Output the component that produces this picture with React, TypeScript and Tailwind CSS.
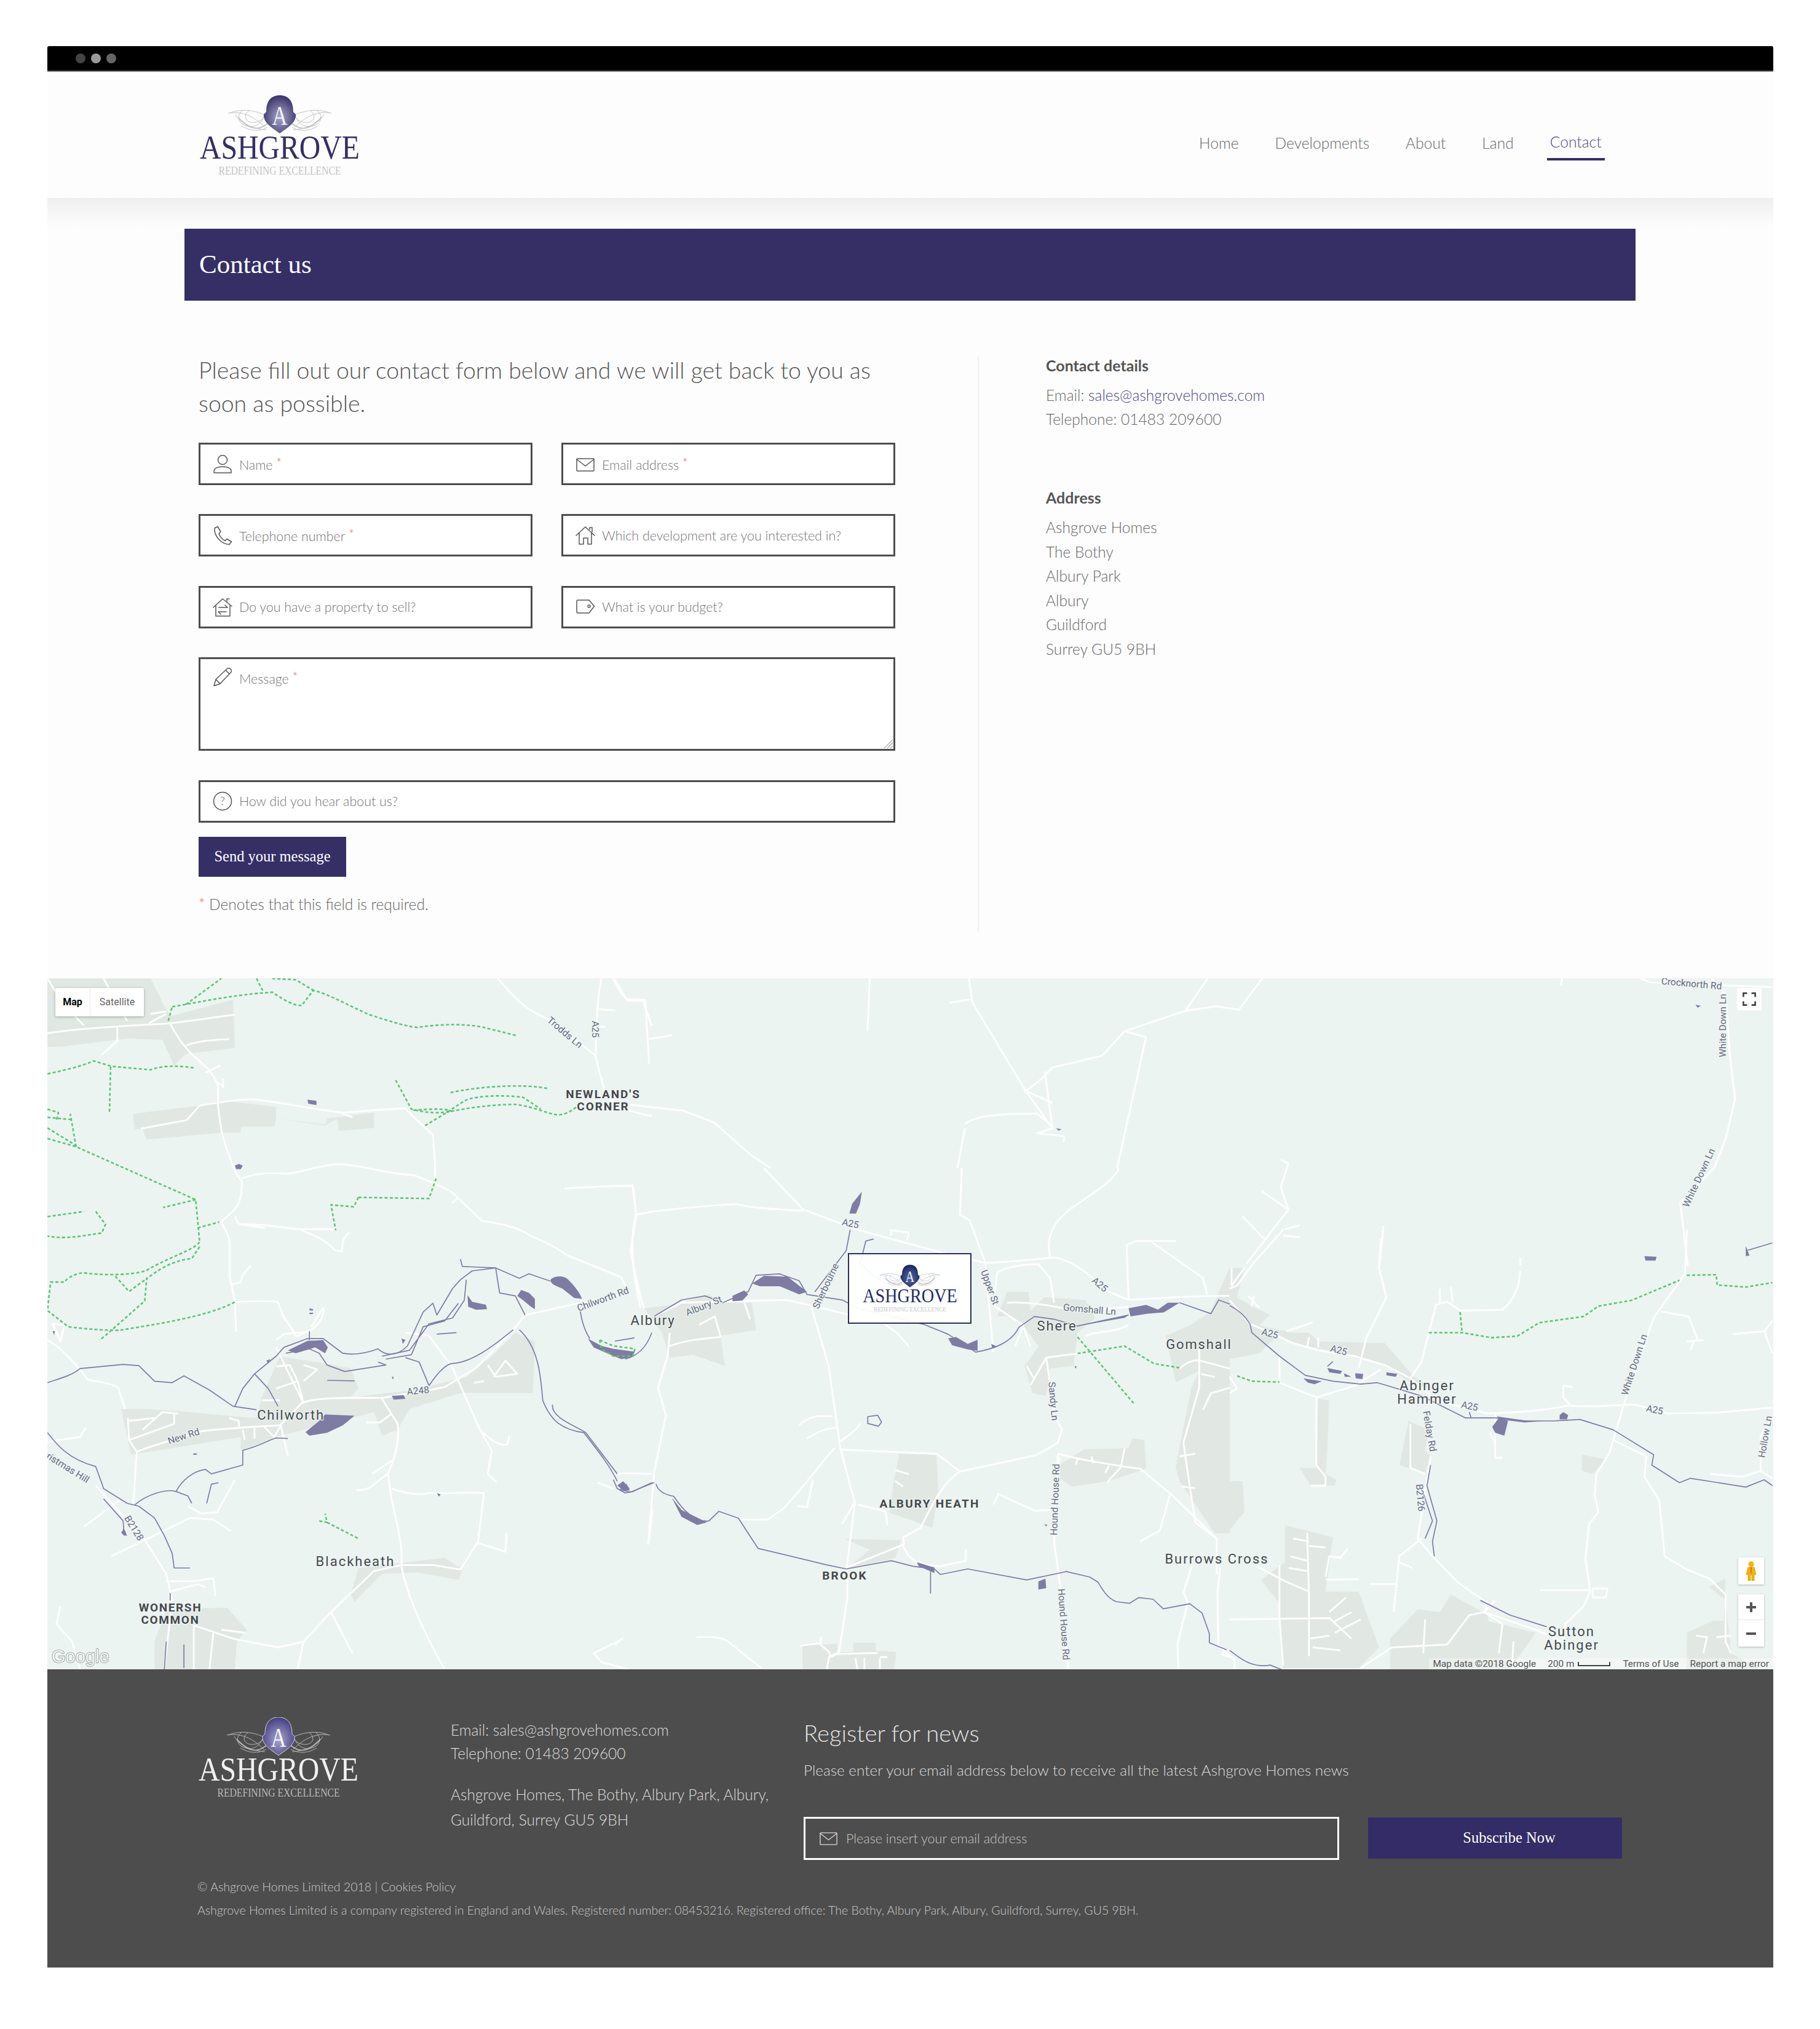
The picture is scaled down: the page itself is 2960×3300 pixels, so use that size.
import React from "react";

type Layer = { o: [number, number]; s: [number, number]; areas?: string[]; roads?: string[]; rivers?: string[]; ponds?: string[]; greens?: string[] };

const layers: Layer[] = [
  {
    o: [60, 1580],
    s: [1 / 1.568, 1 / 2.613],
    areas: [
      "M27,30 L290,30 L320,130 L340,190 L500,120 L505,325 L380,350 L350,400 L320,290 L230,285 L60,320 L27,320Z",
      "M245,605 L415,570 L470,548 L610,575 L610,625 L735,650 L740,625 L860,600 L860,665 L770,678 L765,625 L735,655 L610,625 L605,660 L520,660 L520,685 L470,685 L280,715 L270,670 L250,670Z",
    ],
    roads: [
      "M27,262 C100,245 200,232 330,222 C400,210 450,195 505,183",
      "M340,222 C355,270 370,310 400,360 C430,400 455,440 462,490 L462,560 C465,640 475,720 490,780 C500,830 510,870 522,890 C525,950 515,990 505,1010 L470,1065 C480,1100 492,1120 492,1170 L492,1300 L505,1400 L508,1530",
      "M380,315 C410,295 450,290 490,288",
      "M205,235 L205,295 L165,355",
      "M27,30 L60,120 L80,160 L120,230 M170,30 L200,120 L230,210 M290,180 L330,170 M285,220 L330,180",
      "M265,668 L382,632 L415,570 C470,555 520,540 560,545 C620,555 700,585 780,600 C830,595 880,585 940,582 C960,620 975,640 1010,695 C1012,760 1018,820 1015,880",
      "M780,605 L805,620",
      "M522,880 C560,855 600,855 640,860 C680,850 720,825 760,820 C820,815 880,860 960,865 C1000,890 1040,920 1060,940 L1135,1060 C1200,1075 1240,1100 1260,1125 C1300,1150 1340,1190 1350,1205 C1400,1240 1450,1270 1490,1300 L1510,1370",
      "M505,1040 C510,1065 515,1080 530,1075 C600,1075 640,1095 670,1095 L765,1095",
      "M520,1075 L582,1090 M1075,960 L1058,985",
      "M670,1095 C700,1120 730,1130 760,1185 L778,1190 C780,1150 780,1130 797,1110",
      "M505,1405 C550,1400 590,1400 615,1405 C625,1470 650,1510 660,1550 C700,1530 730,1500 732,1430",
      "M497,1330 L520,1320 L525,1290 L545,1250",
      "M1175,30 C1210,90 1230,150 1300,200 C1360,280 1420,340 1425,365 L1445,490 C1445,510 1460,570 1530,600 L1568,615",
      "M1440,30 C1430,100 1425,250 1425,365 M1425,160 L1475,165 M1425,235 L1450,235",
      "M1345,922 C1400,918 1470,910 1520,910 L1528,1030 C1510,1150 1520,1300 1540,1430",
      "M1528,1035 L1568,1020",
      "M1470,30 C1480,70 1500,120 1510,125 L1545,125 L1568,230",
      "M430,430 L468,400 M460,470 L475,490 L475,455",
    ],
    ponds: ["M690,545 L713,550 L713,568 L692,562Z", "M505,825 L515,818 L525,825 L520,840 L508,840Z", "M695,1432 L705,1435 L703,1442 L695,1440Z M695,1450 L705,1450 L703,1456 L695,1456Z"],
    greens: [
      "M380,140 L470,30",
      "M345,150 C430,125 500,100 600,88 C620,110 650,145 675,145 L705,80 C750,100 800,150 850,185 C900,210 930,230 970,238 C1030,222 1100,222 1140,238 L1222,272",
      "M560,30 L578,88",
      "M600,30 L660,35 L705,80",
      "M335,210 L345,150",
      "M27,435 C70,420 110,405 145,380 L190,403 L290,418 C310,405 345,395 400,410",
      "M188,405 L185,600",
      "M915,462 L955,585 C990,600 1020,605 1055,595 C1100,580 1160,565 1220,565 C1270,575 1300,605 1330,610 C1355,605 1380,580 1385,550",
      "M1055,515 C1120,490 1240,475 1305,498",
      "M990,655 L1040,605 L1090,550 C1120,525 1200,525 1240,535 L1285,585",
      "M960,590 C1000,585 1040,580 1060,595",
      "M27,710 L100,745 L405,970 L415,1150",
      "M410,1090 L465,1065",
      "M405,970 L322,1003",
      "M100,745 L85,605 M27,620 L90,630 M27,585 L55,600 L50,630 M27,665 L100,740",
      "M820,960 L1000,965 L1018,880 M820,960 L808,1000 L750,992 L762,1100",
      "M27,1042 L120,1020 M150,1020 L175,1075 L165,1112 C120,1120 85,1140 27,1125",
      "M415,1150 C395,1190 340,1210 280,1270 C240,1295 150,1290 118,1280 C85,1290 75,1310 70,1320 L35,1320 C30,1400 25,1440 30,1445 L80,1510 C130,1520 170,1525 210,1525 C300,1500 430,1470 505,1405",
      "M415,1170 L395,1220 C340,1230 310,1270 280,1305 L275,1400 L190,1525 L160,1568",
      "M200,1295 L235,1360 L280,1305",
    ],
  },
  {
    o: [60, 2000],
    s: [1 / 1.568, 1 / 2.09],
    areas: [
      "M215,610 C330,605 480,635 560,640 L575,565 L620,430 L800,470 L820,540 L800,570 L960,545 L1095,500 L1160,430 L1220,350 L1270,380 L1265,555 L1080,555 L950,610 L920,680 L880,700 L860,620 L620,700 L520,750 L520,705 L240,765Z",
      "M820,1150 L1040,1115 L1085,1155 L1075,1190 L970,1165 L880,1170 L810,1265 L800,1240Z",
      "M300,1400 L330,1290 L485,1285 L535,1360 L510,1400 L505,1495 L300,1495Z",
    ],
    roads: [
      "M27,375 C60,400 90,440 130,510 C170,520 200,525 208,540 L225,610",
      "M232,640 L235,715 L255,755 C250,830 250,880 245,930",
      "M255,755 C290,735 330,722 420,685 C500,672 560,670 620,665 L675,590 C700,575 740,570 880,572 L1000,545 L1040,535 L1120,470 L1215,340 L1245,290 L1380,250 L1510,215",
      "M880,575 L920,660 C925,720 915,770 895,830 L900,875 C905,950 925,1000 930,1100 L930,1145 C945,1260 1000,1400 1040,1495",
      "M610,400 L680,590 M622,665 L640,770",
      "M1000,360 L1060,470 L1130,680 L1160,750 L1150,830 L1172,858 M940,350 L1000,360",
      "M1130,680 C1160,720 1180,735 1200,730 L1205,700",
      "M905,880 C940,895 970,905 1000,895 C1040,900 1080,890 1140,895 L1125,1060 L1080,1155 L1010,1140 L930,1140 L860,1160 L750,1300 L680,1400 L615,1420 L500,1390 L400,1345",
      "M1125,1065 L1195,1095 L1198,1030",
      "M27,720 L110,705 L125,672",
      "M275,1055 L390,980 L450,985 L495,1025",
      "M150,870 L275,1055 L330,1170 L345,1260 L325,1490",
      "M120,1010 L210,920 M275,1055 L190,1110 M505,850 L460,960 L420,965 L385,940",
      "M855,830 L905,785 M815,885 C850,890 860,860 895,830",
      "M750,1300 L805,1440 M680,1400 L665,1495 M400,1345 L400,1495 M450,1370 L440,1495 M470,1360 L530,1370",
      "M235,650 L300,640 M270,680 L320,620 L360,625 M235,715 L350,660 M350,660 L350,620 M490,640 L515,650 L515,670",
      "M525,680 L530,715 M555,675 L555,710 M580,670 L605,705 L620,670",
      "M610,465 L645,460 L665,515 L610,540 M680,460 L715,475 L680,515 M665,515 L680,590 M575,580 L620,580",
      "M1115,520 L1140,515 M1150,460 L1170,500 L1225,490 L1195,445 L1165,500",
      "M840,655 L875,655 L905,625",
      "M330,1195 L400,1195 L450,1185 L455,1245 M340,1230 L410,1205 L430,1215",
      "M60,1280 L50,1340 L90,1400 L110,1495 M1495,1390 L1420,1440 L1440,1470 L1510,1495",
      "M1570,950 L1560,1070 M1430,860 L1470,880 M1480,830 C1510,825 1540,830 1568,830",
      "M700,330 L730,265 M610,375 L630,355 L700,345 M655,345 L625,290",
      "M45,320 L70,325 L60,380 L40,320Z",
    ],
    rivers: [
      "M27,520 C60,505 90,495 110,472 L220,458 L260,462 L300,515 L345,520 L375,497 L440,545 L500,600 L560,612",
      "M505,600 L525,540 L555,490 L610,430 L630,400 L690,370 L730,370 L780,420 C820,430 860,410 870,405 C890,430 920,430 945,395 L985,280 L1010,250 L1020,290 L1060,200 L1080,170 L1110,140 L1170,130 L1230,165 L1255,150 L1310,175",
      "M870,450 L890,460 L785,482 L740,460 L720,420 L695,405 L635,420",
      "M1170,130 L1180,215 L1220,225 L1245,290 M1080,100 L1085,125 L1170,130",
      "M555,490 L590,540 L615,600",
      "M1000,530 C1030,470 1050,455 1060,455 C1110,450 1160,400 1215,340",
      "M940,435 L975,450 L1000,530 M880,430 L950,410 L1000,320 L1060,300 L1090,240 L1095,170 M890,440 L955,425 L985,330 L1040,310 L1075,250",
      "M1230,340 C1280,400 1285,500 1290,580 C1310,650 1340,680 1395,690 C1430,750 1460,800 1480,855",
      "M1315,595 C1310,640 1380,670 1400,690 L1480,830",
      "M27,690 C50,730 80,780 150,805 L165,860 L170,880 L230,930 L260,940 L300,980 L325,1040 L345,1100 L350,1150 L390,1150",
      "M170,915 L220,990 L222,1030",
      "M250,935 C280,900 330,880 355,890 L385,905 L395,930 M355,890 C370,850 400,820 430,815 L445,830 L525,800 L525,750 C570,735 590,715 610,708 L640,710",
      "M433,930 L445,865 L463,860 M740,512 L810,514 M1020,355 L1070,350 M695,345 L695,375",
      "M1385,270 C1390,320 1400,350 1410,370",
      "M1500,440 C1530,430 1555,400 1568,350",
      "M1470,850 L1480,880 L1500,895 L1520,890 L1568,860",
      "M375,1490 L375,1410 M340,1235 L340,1260 M330,1400 L325,1495",
    ],
    ponds: [
      "M1310,170 C1320,155 1345,155 1355,170 C1370,190 1385,215 1390,235 L1370,232 L1340,200 C1320,190 1310,185 1310,170Z",
      "M1098,222 L1110,245 L1145,255 L1148,270 L1120,272 L1100,262Z",
      "M1225,225 L1235,205 L1255,215 L1270,235 L1270,270 L1260,262 L1240,240Z",
      "M640,410 L690,378 L730,375 L742,400 L735,420 L710,400 L660,420Z",
      "M735,628 L810,632 L780,665 L740,690 L695,700 L685,688 L720,650Z",
      "M1405,370 L1440,395 L1470,405 L1525,415 L1515,435 L1490,440 L1445,415 L1420,400Z",
      "M905,565 L935,562 L940,575 L910,578Z",
      "M1480,870 L1495,855 L1512,880 L1500,890Z",
      "M215,1030 L222,1015 L230,1040 L222,1040Z",
      "M400,760 L408,760 L408,765 L398,765Z",
      "M1020,895 L1030,900 L1025,907Z",
      "M930,370 L940,375 L933,388Z M905,500 L910,500 L908,510Z M585,445 L595,440 L590,455Z",
      "M40,345 L46,345 L44,358Z",
    ],
    greens: [
      "M720,990 L740,995 L735,965 M740,995 L820,1050",
      "M1435,375 L1440,405 L1470,430 L1520,430 L1525,405 L1470,395Z",
    ],
  },
  {
    o: [1000, 1900],
    s: [1 / 1.568, 1 / 2.24],
    areas: [
      "M75,510 L160,495 L240,460 L270,490 L350,490 L360,590 L270,610 L280,720 L200,680 L140,690 L120,600Z",
      "M1000,450 L1055,450 L1060,520 L1095,470 L1200,480 L1225,545 L1180,600 L1170,720 L1110,730 L1100,830 L1065,820 L1045,720 L1080,650 L1040,570 L1010,540 L975,540Z",
      "M725,1040 L820,1045 L825,1180 L810,1310 L700,1255 L710,1150Z",
      "M585,1350 L730,1355 L715,1420 L590,1460 L650,1390Z",
      "M1135,1080 L1195,1025 L1310,1020 L1320,985 L1350,990 L1355,1095 L1260,1140 L1165,1160 L1135,1130Z",
      "M1405,610 L1470,570 L1520,520 L1568,360 L1568,1330 L1530,1330 L1440,1140 L1430,1090 L1470,800 L1490,740 L1430,780Z",
    ],
    roads: [
      "M380,0 L480,150 L620,225 L840,310 L945,345 C1020,340 1080,330 1120,325 C1170,335 1220,400 1260,450 L1310,480 C1380,475 1450,465 1568,465",
      "M50,170 C100,155 200,140 310,130 C340,145 420,150 480,155",
      "M45,65 L0,65 M45,65 L55,170 L40,300 L65,470 L75,510",
      "M885,0 L880,170 L905,190 L945,345 L965,670",
      "M1285,0 C1270,50 1220,90 1170,140 C1110,200 1100,260 1110,325",
      "M100,540 L170,490 L290,485 L440,480 L500,500 L600,535",
      "M500,500 L545,720 L575,1020 L612,1220 L590,1470",
      "M140,600 L135,680 L110,800 L130,900 L100,1110 L85,1370",
      "M135,650 C170,630 220,620 270,615 L255,540 L215,570 M330,490 L345,550",
      "M575,1025 L820,1040 L880,1105 L1075,1045 L1130,1000 L1140,950 L1120,900",
      "M880,1105 C840,1140 810,1220 780,1310 L735,1345 L738,1370 L590,1455",
      "M735,1375 C750,1430 770,1445 830,1450 L895,1430 L895,1390",
      "M1130,1040 C1180,1060 1280,1085 1340,1095 L1420,1190 L1535,1350 L1535,1480",
      "M1130,1040 L1120,1360 L1140,1568",
      "M570,1000 C600,970 620,950 625,930 M470,935 C500,900 520,900 555,905 M490,985 C530,950 540,950 565,945",
      "M560,1020 C510,1100 500,1130 430,1240 L390,1280 L320,1280 M505,1135 L490,1235 L465,1230",
      "M1000,490 C1060,485 1110,500 1180,520 L1310,505",
      "M975,1185 L1070,1248 L1110,1245 M965,1225 L980,1185",
      "M1490,660 L1490,800 L1450,1000 L1460,1100 L1480,1290 L1535,1350",
      "M1180,675 L1100,690 L1060,790 M1100,690 L1120,880 M1050,720 L1070,770",
      "M975,380 C1000,355 1050,350 1080,350 L1110,400 L1120,490 M975,380 L965,500 L1040,570 L1060,650",
      "M1310,480 L1305,280 L1330,265 L1430,265 M1370,270 L1500,400 L1510,460",
      "M1490,700 C1460,700 1450,720 1440,730 M1490,700 L1568,730 M1495,750 L1530,760",
      "M1500,880 L1520,820 L1568,800 M1440,1050 L1480,1040 M1445,1160 L1480,1165",
      "M1415,1190 L1390,1320 L1340,1360",
      "M1200,610 C1240,590 1280,600 1310,570",
      "M610,1220 L580,1295 M620,1225 L690,1250 L695,1300 M715,1100 L750,1115 M715,1140 L735,1160",
      "M680,560 L720,600 L750,650 M700,225 L750,235 L745,262 M706,225 L704,245",
      "M1135,1055 L1130,1080 M1180,1060 L1175,1080 M1215,1050 L1220,1075 M1260,1085 L1250,1110 M1300,1020 L1290,1090 L1255,1145",
      "M1040,580 L1020,650",
    ],
    rivers: [
      "M100,540 L170,480 L230,465 L275,490 L340,450 L360,390 L420,385 L470,410 L490,460 L580,480 L620,510 L790,570 L850,605 L920,670 C960,660 1010,640 1030,580 L1070,540 L1120,550 L1180,575 L1310,535",
      "M600,225 L590,300 L510,450",
      "M625,350 L640,265 L660,258 M620,340 L660,390 L690,420",
      "M100,1145 L40,1180 L10,1170",
      "M105,1150 C110,1180 130,1190 150,1195 C180,1260 210,1290 240,1285 L265,1250 L315,1275 L365,1385 L540,1445 L590,1460 L705,1430 L760,1450 L815,1460 L830,1480 L900,1460 L1050,1500 L1150,1470",
      "M805,1470 L805,1550",
      "M645,905 L670,900 L680,925 L672,940 L645,930Z",
      "M1440,490 L1520,530 L1540,480 L1568,495",
      "M0,630 L50,618",
    ],
    ponds: [
      "M630,85 L625,130 L615,165 L598,165 L605,130Z",
      "M350,420 L380,392 L440,395 L490,450 L470,460 L420,430 L370,430Z",
      "M300,465 L330,445 L340,460 L325,482 L300,485Z",
      "M850,620 L870,615 L900,640 L925,625 L925,665 L900,660 L860,645Z",
      "M1310,510 L1355,498 L1385,515 L1410,490 L1440,490 L1400,525 L1360,530 L1315,540Z",
      "M1190,570 L1310,535 L1300,545 L1200,570Z",
      "M145,1200 L170,1245 L235,1290 L210,1300 L170,1270Z",
      "M10,1150 L30,1150 L38,1175 L15,1170Z",
      "M770,1435 L815,1455 L815,1475 L775,1450Z",
      "M1080,1505 L1098,1495 L1100,1530 L1080,1535Z",
      "M960,640 L975,650 L962,655Z",
      "M1095,1298 L1103,1298 L1100,1305Z M1172,722 L1178,722 L1175,730Z",
    ],
    greens: ["M1180,615 L1325,860", "M1180,675 L1300,648 L1375,712 L1445,728"],
  },
  {
    o: [1000, 2540],
    s: [1 / 1.508, 1 / 3],
    areas: ["M460,410 L545,400 L545,440 L585,440 L585,395 L640,395 L640,435 L690,440 L685,525 L460,525Z"],
    roads: [
      "M1096,180 L1112,525",
      "M570,90 L570,180 L550,440 L525,465 L520,525",
      "M200,368 C230,365 260,370 275,385 L360,520",
      "M0,405 L18,375",
      "M455,410 L500,398 L525,440 L530,465 L545,450 L645,445",
      "M505,365 L505,400 M590,470 L595,525 M612,470 L612,525 M650,470 L650,525 M650,465 L668,465",
      "M1415,20 L1395,150 L1405,200 L1380,400 L1382,525",
      "M1485,20 L1478,150 L1480,410 L1520,480 L1520,525 M1495,430 L1490,455 L1520,470",
    ],
    rivers: ["M1105,47 L1165,75 L1185,100 C1200,150 1210,180 1230,195 L1262,203 L1285,175 L1320,183 L1345,230 L1410,205 L1440,250 L1458,350 L1458,395 L1500,430"],
  },
  {
    o: [2000, 2000],
    s: [1 / 1.668, 1 / 2.09],
    areas: [
      "M0,130 L40,130 L20,230 L60,260 L110,290 L80,325 L170,350 L215,350 L240,380 L420,385 L500,500 L560,545 L490,520 L420,460 L340,430 L170,385 L130,360 L80,420 L0,440Z",
      "M240,575 L270,580 L265,740 L260,830 L290,850 L285,870 L220,870 L190,810 L235,810Z",
      "M485,650 L540,680 L530,750 L545,770 L530,830 L460,800Z",
      "M955,765 L1020,780 L985,830 L955,820Z",
      "M0,855 L35,855 L40,960 L0,1020Z",
      "M150,1005 L280,1045 L260,1230 L350,1230 L405,1420 L350,1490 L145,1490 L135,1270 L85,1190 L150,1130Z",
      "M435,1390 L510,1290 L570,1300 L600,1240 L700,1310 L700,1330 L830,1370 L760,1495 L435,1495Z",
      "M1240,1370 L1310,1330 L1340,1330 L1345,1185 L1300,1215 L1345,1260 L1360,1440 L1440,1495 L1240,1495Z",
    ],
    roads: [
      "M145,0 L60,120 L20,190 L0,200 M145,20 L190,25",
      "M0,240 L55,320 L130,360 L170,385 L240,410 L340,430 L420,460 L490,505 L560,580 L700,625 C800,620 850,615 920,598 C1000,605 1040,595 1100,595 L1190,625 L1320,622 L1472,605",
      "M410,30 L405,130 L425,230 L370,370 L350,470",
      "M540,350 L520,450 L490,505 M540,350 L560,255 L590,245 L625,275 L740,272 C770,240 785,200 788,140",
      "M570,200 L570,250 M600,195 L605,245",
      "M1240,0 L1235,150 L1150,300 L1070,590 L1030,760 L995,830 L990,900 L1000,960 L975,1000 L965,1120 L978,1230 L960,1280 L910,1340 L905,1400",
      "M1170,278 L1245,295 L1270,375 M1240,380 L1285,375 M1250,410 L1260,378",
      "M905,530 L930,535 M905,530 L905,570 L925,598",
      "M1040,715 L1130,770 L1125,840 L1165,920 L1180,1110 L1240,1155 L1300,1185 L1345,1240 L1345,1400 L1360,1440",
      "M1305,830 L1390,840 L1440,820 L1440,700 L1472,640 M1440,820 L1472,845",
      "M1365,355 L1450,345 L1472,420 M1450,345 L1472,310",
      "M135,430 L135,520 L235,570 L340,530 L410,475 M155,345 L225,315 M240,365 L240,400 M215,365 L210,400",
      "M235,570 L235,800 L260,840 L260,870 L220,870",
      "M545,770 L510,1050 L550,1110 L620,1200 L700,1270 L690,1300 L830,1360 L900,1400",
      "M520,1050 L460,1110 L445,1300 M460,1130 L495,1150 M380,1205 L455,1205",
      "M720,620 L720,775 L740,775 M705,690 L720,720",
      "M842,1225 L975,1225 M985,1220 L1025,1220 L1020,1250 L985,1250Z",
      "M0,1325 L270,1320 L330,1390 M135,1140 L135,1320 L145,1480 M210,1030 L215,1240 L215,1450",
      "M440,1420 L590,1410 L650,1310 L690,1300 L740,1340 L730,1440 M355,1490 L440,1420",
      "M172,1050 L215,1060 M215,1075 L260,1080 M165,1110 L210,1125 M160,1150 L210,1160 M260,1190 L350,1188",
      "M260,1180 L270,1110 L300,1115 L320,1085 M75,1145 L150,1195 L215,1230",
      "M315,1250 L270,1300 M330,1300 L280,1335 M355,1325 L285,1370 M215,1390 L270,1380 M225,1420 L300,1430",
      "M490,660 L490,810 L530,830 M5,130 L5,190 L40,130 M0,500 L20,540 L0,555",
      "M690,1300 L720,1260 M530,1325 L525,1440 M770,1400 L765,1490",
      "M1265,1380 L1295,1385 L1285,1440 M1320,1385 L1360,1380",
      "M50,225 L80,265 M65,225 L60,260",
    ],
    rivers: [
      "M0,258 C20,270 40,290 55,320 L60,350 L135,430 L205,495 L280,515 L355,525 L400,520 L520,565 L640,640 L720,640 L800,650 L880,650 L950,645 L1040,680 L1150,765 L1145,800 L1220,860 L1250,845 L1400,875 L1450,850 L1472,870",
      "M1405,70 L1472,45",
      "M545,800 L535,870 L562,990 L550,1060 L555,1110",
      "M525,895 L550,990 L530,1050",
      "M680,1260 L760,1310 L860,1350",
      "M0,1430 C30,1460 60,1490 110,1480 L140,1495",
      "M265,465 L280,448 M650,620 L655,640",
    ],
    ponds: [
      "M265,470 L305,480 L300,490 L270,485Z",
      "M425,485 L455,490 L450,500 L425,495Z",
      "M712,670 L730,640 L755,650 L745,700 L720,690Z",
      "M725,635 L810,650 L860,650 L800,655 L730,645Z",
      "M895,630 L905,620 L918,630 L915,645 L895,645Z",
      "M200,505 L250,515 L230,525 L212,520Z",
      "M1125,90 L1158,92 L1155,105 L1128,105Z",
      "M1400,55 L1410,88 L1400,90Z",
      "M340,488 L362,490 L360,508 L342,505Z M310,488 L330,500 L312,500Z",
    ],
    greens: [
      "M20,497 L60,515 L135,518",
      "M540,350 L630,350 L710,367 L780,362 L840,316 L960,295 L1000,260 L1090,240 L1220,172",
      "M625,280 L630,345",
      "M1240,155 L1320,153 L1322,188 L1400,195 L1472,180",
    ],
  },
  {
    o: [1000, 1580],
    s: [1 / 0.808, 1 / 3.136],
    roads: [
      "M0,40 L15,140 L40,145 L45,470 M45,345 L75,325",
      "M335,30 L332,305",
      "M465,30 L470,160 L540,610 L575,800 M470,140 L440,160",
      "M852,30 L820,195 L790,178 L750,200 L670,305 L640,430 L575,490 L560,550 L540,610",
      "M670,305 L698,335 L660,1003",
      "M565,510 L575,800 L555,825 L590,840 L590,870 M780,30 L750,200 M540,610 L575,670",
      "M20,680 L90,710 L130,770 L180,940 L205,1003",
      "M460,780 C470,740 500,725 555,725 L575,790 M460,800 L450,1003",
      "M875,960 L885,980 L875,1100 L885,1215 L830,1490 M850,1120 L885,1215 M825,1250 L855,1370",
      "M1010,1295 L1005,1500 M1190,1460 L1190,1500",
      "M1440,30 L1460,120 L1465,420 L1472,650 L1460,850 L1445,1000 L1400,1180 L1410,1500",
      "M1345,30 L1360,55 L1450,70 L1520,80 M1245,30 L1243,70 M880,1315 L900,1295",
    ],
    ponds: ["M1420,170 L1427,175 L1423,185Z", "M580,800 L587,805 L583,812Z"],
  },
];

type Lab = { t: string; x: number; y: number; r?: number; z?: number; b?: boolean; sp?: number; c?: string; a?: "start" | "middle" | "end" };
const labels: Lab[] = [
  { t: "NEWLAND'S", x: 981, y: 1781, z: 19, b: true, sp: 1.9 },
  { t: "CORNER", x: 981, y: 1801, z: 19, b: true, sp: 1.9 },
  { t: "Trodds Ln", x: 918, y: 1680, r: 40 },
  { t: "A25", x: 967, y: 1674, r: 90 },
  { t: "Chilworth Rd", x: 981, y: 2114, r: -20 },
  { t: "Albury", x: 1062, y: 2149, z: 22, sp: 1.8, c: "#454a4e" },
  { t: "Albury St", x: 1145, y: 2125, r: -22 },
  { t: "Sherbourne", x: 1344, y: 2092, r: -65 },
  { t: "A25", x: 1383, y: 1991, r: 12 },
  { t: "A25", x: 1788, y: 2090, r: 40 },
  { t: "Upper St", x: 1609, y: 2094, r: 70 },
  { t: "Gomshall Ln", x: 1772, y: 2131, r: 5 },
  { t: "Shere", x: 1719, y: 2158, z: 22, sp: 1.8, c: "#454a4e" },
  { t: "Gomshall", x: 1950, y: 2188, z: 22, sp: 1.8, c: "#454a4e" },
  { t: "Sandy Ln", x: 1712, y: 2279, r: 85 },
  { t: "Hound House Rd", x: 1717, y: 2439, r: -88 },
  { t: "Hound House Rd", x: 1729, y: 2642, r: 86 },
  { t: "ALBURY HEATH", x: 1512, y: 2447, z: 19, b: true, sp: 2.2 },
  { t: "BROOK", x: 1374, y: 2564, z: 19, b: true, sp: 2.2 },
  { t: "Chilworth", x: 473, y: 2303, z: 22, sp: 1.8, c: "#454a4e" },
  { t: "New Rd", x: 299, y: 2337, r: -18 },
  { t: "A248", x: 680, y: 2263, r: -5 },
  { t: "Christmas Hill", x: 143, y: 2409, r: 32, a: "end" },
  { t: "B2128", x: 217, y: 2486, r: 58 },
  { t: "Blackheath", x: 578, y: 2541, z: 22, sp: 2, c: "#454a4e" },
  { t: "WONERSH", x: 277, y: 2616, z: 19, b: true, sp: 1.6 },
  { t: "COMMON", x: 277, y: 2636, z: 19, b: true, sp: 1.6 },
  { t: "A25", x: 2065, y: 2170, r: 15 },
  { t: "A25", x: 2177, y: 2197, r: 15 },
  { t: "Abinger", x: 2321, y: 2255, z: 22, sp: 2, c: "#454a4e" },
  { t: "Hammer", x: 2321, y: 2277, z: 22, sp: 2, c: "#454a4e" },
  { t: "A25", x: 2390, y: 2288, r: 12 },
  { t: "Felday Rd", x: 2324, y: 2328, r: 80 },
  { t: "B2126", x: 2309, y: 2436, r: 85 },
  { t: "White Down Ln", x: 2659, y: 2220, r: -72 },
  { t: "A25", x: 2691, y: 2294, r: 12 },
  { t: "Hollow Ln", x: 2872, y: 2337, r: -80 },
  { t: "Burrows Cross", x: 1979, y: 2537, z: 22, sp: 2, c: "#454a4e" },
  { t: "Sutton", x: 2556, y: 2655, z: 22, sp: 2, c: "#454a4e" },
  { t: "Abinger", x: 2556, y: 2677, z: 22, sp: 2, c: "#454a4e" },
  { t: "White Down Ln", x: 2803, y: 1668, r: -90 },
  { t: "White Down Ln", x: 2764, y: 1916, r: -65 },
  { t: "Crocknorth Rd", x: 2751, y: 1601, r: 5 },
];

const ROAD = "#ffffff";
const RIVER = "#7f7ca3";
const AREA = "#e1e8e4";
const GREEN = "#5fc47b";

function MapLayer({ pick, stroke, width, fill, dash }: { pick: keyof Layer; stroke?: string; width?: number; fill?: string; dash?: string }) {
  return (
    <>
      {layers.map((l, i) => (
        <g key={i} transform={`translate(${l.o[0]} ${l.o[1]}) scale(${l.s[0]} ${l.s[1]})`}>
          {((l[pick] as string[]) || []).map((d, j) => (
            <path key={j} d={d} fill={fill || "none"} stroke={stroke || "none"} strokeWidth={width} strokeDasharray={dash} strokeLinejoin="round" vectorEffect="non-scaling-stroke" />
          ))}
        </g>
      ))}
    </>
  );
}

function Logo({ text, tag, swirl, light, dark, cls, outline }: { text: string; tag: string; swirl: string; light: string; dark: string; cls: string; outline?: boolean }) {
  const id = `shield-${text.slice(1)}-${dark.slice(1)}`;
  const wing = (
    <g fill="none" stroke={swirl} strokeWidth="1">
      <path d="M48 29 C70 25 90 34 108 52" />
      <path d="M50 29 C68 21 92 24 110 33" />
      <path d="M60 31 C68 46 90 55 110 56" />
      <path d="M72 24 C60 34 64 49 84 51 C96 51 104 43 108 30" />
      <path d="M82 25 C70 34 78 46 92 44 C100 43 106 38 108 32" />
      <path d="M64 36 C78 50 92 62 112 46" strokeWidth="1.8" />
      <path d="M70 50 C84 58 98 60 112 52" />
    </g>
  );
  return (
    <svg viewBox="0 0 264 132" className={cls}>
      <defs>
        <radialGradient id={id} cx="50%" cy="58%" r="60%">
          <stop offset="0%" stopColor={light} />
          <stop offset="100%" stopColor={dark} />
        </radialGradient>
      </defs>
      {wing}
      <g transform="translate(264 0) scale(-1 1)">{wing}</g>
      <path d="M132 0 C118 0 110 9 110 27 L106 31 C105 44 118 52 132 62 C146 52 159 44 158 31 L154 27 C154 9 146 0 132 0Z" fill={`url(#${id})`} stroke={outline ? "#d8d8d8" : "none"} strokeWidth="1" />
      <text x="132" y="48" textAnchor="middle" fontFamily="Liberation Serif, serif" fontSize="44" fill="#f4f4f8" textLength="25" lengthAdjust="spacingAndGlyphs">A</text>
      <text x="132" y="103" textAnchor="middle" fontFamily="Liberation Serif, serif" fontSize="55" fill={text} textLength="260" lengthAdjust="spacingAndGlyphs">ASHGROVE</text>
      <text x="132" y="129" textAnchor="middle" fontFamily="Liberation Serif, serif" fontSize="18" fill={tag} textLength="199" lengthAdjust="spacingAndGlyphs">REDEFINING EXCELLENCE</text>
    </svg>
  );
}

const ic = { fill: "none", stroke: "#555", strokeWidth: 1.5, strokeLinejoin: "round" as const, strokeLinecap: "round" as const };
const Ico = ({ children }: { children: React.ReactNode }) => (
  <svg viewBox="0 0 32 32" className="w-[32px] h-[32px] shrink-0" {...ic}>{children}</svg>
);
const UserI = () => <Ico><circle cx="16" cy="9" r="7.5" /><path d="M2 27 C2 22 9 20 16 20 C23 20 30 22 30 27 V30 H2Z" /></Ico>;
const MailI = () => <Ico><rect x="2" y="7" width="28" height="20" rx="1" /><path d="M2 8 L16 19 L30 8" /></Ico>;
const PhoneI = () => <Ico><path d="M3 4 L8 1.5 L13 10 L10 13 C12 18 15 22 20 24.5 L23 21.5 L30.5 26 L27 30.5 C14 30 2 17 3 4Z" /></Ico>;
const HouseI = () => <Ico><path d="M1 16 L16 2 L31 16 M6 12 V30 H13 V20 H20 V30 H26 V12 M23 6 V3 H27 V10" /></Ico>;
const SellI = () => <Ico><path d="M1 17 L16 3 L31 15 M5 14 V31 H28 V14 M23 7 V3 H27 M10 17 H24 M24 17 L20 13 M22 24 H9 M9 24 L13 28" /></Ico>;
const TagI = () => <Ico><path d="M4 5 H22 L30.5 15 L22 26 H4 Q2 26 2 24 V7 Q2 5 4 5Z" /><circle cx="22" cy="15" r="2" /></Ico>;
const PenI = () => <Ico><path d="M2 30.5 L5 20 L24 2 Q27 1 30 4 Q31 6 30 8 L12 27Z M5 20 L12 27 M21 5 L27 11" /></Ico>;
const QuesI = () => <Ico><circle cx="16" cy="16" r="14.5" /><text x="16" y="22" textAnchor="middle" fontSize="18" fill="#555" stroke="none" fontFamily="Lato, sans-serif">?</text></Ico>;

function Star() {
  return <span className="text-[#ef6a6a] text-[21px] align-[3px]"> *</span>;
}

function Field({ icon, label, req, cls }: { icon: React.ReactNode; label: string; req?: boolean; cls?: string }) {
  return (
    <div className={`h-[69px] border-[3px] border-[#4d4d4d] bg-white flex items-center pl-[20px] gap-[11px] text-[21.4px] text-[#757575] font-light ${cls || ""}`}>
      {icon}
      <span>
        {label}
        {req && <Star />}
      </span>
    </div>
  );
}

const serif = "font-['Liberation_Serif',serif]";

export default function App() {
  return (
    <div className="w-[2960px] h-[3300px] bg-white pt-[75px] pl-[77px] font-['Lato',sans-serif]">
      <div className="w-[2807px] bg-[#fdfdfd]">
        <div className="h-[42px] bg-black rounded-t-[3px] border-b-2 border-[#888] flex items-center gap-[9px] pl-[46px]">
          <span className="w-[16px] h-[16px] rounded-full bg-[#444]" />
          <span className="w-[16px] h-[16px] rounded-full bg-[#999]" />
          <span className="w-[16px] h-[16px] rounded-full bg-[#666]" />
        </div>

        <header className="h-[205px] flex items-start">
          <Logo text="#352f66" tag="#c4c4c4" swirl="#c2c2c2" light="#a9a7cb" dark="#352f66" cls="ml-[246px] mt-[38px] w-[264px] h-[132px]" />
          <nav className="ml-[1363px] mt-[98px] flex gap-[59px] text-[24.6px] font-light text-[#6a6a6a]">
            <span>Home</span>
            <span>Developments</span>
            <span>About</span>
            <span>Land</span>
            <span className="text-[#4f4a86] -mt-[2px] px-[5px] -mx-[5px] h-[48px] border-b-[4px] border-[#352f66]">Contact</span>
          </nav>
        </header>

        <section className="pt-[50px] pb-[76px] bg-[linear-gradient(#efefef,#fdfdfd_48px)]">
          <div className="ml-[223px] w-[2360px] h-[117px] bg-[#352f66] flex items-center pl-[24px]">
            <h1 className={`${serif} text-[43px] text-white`}>Contact us</h1>
          </div>

          <div className="mt-[91px] h-[935px] flex pl-[246px]">
            <div className="w-[1133px]">
              <p className="-mt-[5px] mb-[37px] text-[37.4px] leading-[54px] font-light text-[#555]">
                Please fill out our contact form below and we will get back to you as soon as possible.
              </p>
              <div className="grid grid-cols-2 gap-x-[47px] gap-y-[47.4px]">
                <Field icon={<UserI />} label="Name" req />
                <Field icon={<MailI />} label="Email address" req />
                <Field icon={<PhoneI />} label="Telephone number" req />
                <Field icon={<HouseI />} label="Which development are you interested in?" />
                <Field icon={<SellI />} label="Do you have a property to sell?" />
                <Field icon={<TagI />} label="What is your budget?" />
                <div className="col-span-2 relative h-[152px] border-[3px] border-[#4d4d4d] bg-white flex items-start pl-[20px] pt-[13px] gap-[11px] text-[21.4px] text-[#757575] font-light">
                  <PenI />
                  <span>
                    Message<Star />
                  </span>
                  <svg viewBox="0 0 16 16" className="absolute right-0 bottom-0 w-[16px] h-[16px]" stroke="#777" strokeWidth="1">
                    <path d="M1 15 L15 1 M6 15 L15 6 M11 15 L15 11" />
                  </svg>
                </div>
                <Field icon={<QuesI />} label="How did you hear about us?" cls="col-span-2" />
              </div>
              <div className={`mt-[23px] w-[240px] h-[65px] bg-[#352f66] flex items-center justify-center ${serif} text-[24.5px] text-white`}>Send your message</div>
              <p className="mt-[28px] text-[24.5px] leading-[34px] font-light text-[#666]">
                <span className="text-[#ef6a6a]">*</span> Denotes that this field is required.
              </p>
            </div>

            <div className="ml-[134px] w-[2px] bg-[#f0f0f0]" />

            <div className="ml-[109px] text-[24.6px] leading-[39.5px] font-light text-[#6a6a6a]">
              <h3 className="-mt-[5px] mb-[8px] text-[25px] font-bold text-[#555]">Contact details</h3>
              <p>Email: <span className="text-[#4f4a86]">sales@ashgrovehomes.com</span></p>
              <p>Telephone: 01483 209600</p>
              <h3 className="mt-[88px] mb-[9px] text-[25px] font-bold text-[#555]">Address</h3>
              <p>Ashgrove Homes</p>
              <p>The Bothy</p>
              <p>Albury Park</p>
              <p>Albury</p>
              <p>Guildford</p>
              <p>Surrey GU5 9BH</p>
            </div>
          </div>
        </section>

        <div className="relative h-[1124px] bg-[#ecf4f1] overflow-hidden">
          <svg viewBox="77 1591 2807 1124" className="block w-full h-full">
            <MapLayer pick="areas" fill={AREA} />
            <MapLayer pick="roads" stroke={ROAD} width={2.8} />
            <MapLayer pick="rivers" stroke={RIVER} width={1.7} />
            <MapLayer pick="ponds" fill={RIVER} />
            <MapLayer pick="greens" stroke={GREEN} width={2.6} dash="5 3.5" />
            {labels.map((l, i) => (
              <text
                key={i}
                x={l.x}
                y={l.y}
                textAnchor={l.a || "middle"}
                dominantBaseline="middle"
                fontFamily="Roboto, sans-serif"
                fontSize={l.z || 15.5}
                fontWeight={l.b ? 700 : 400}
                letterSpacing={l.sp || 0}
                fill={l.c || (l.b ? "#44484c" : "#666a80")}
                stroke="#ecf4f1"
                strokeWidth="2.5"
                paintOrder="stroke"
                transform={l.r ? `rotate(${l.r} ${l.x} ${l.y})` : undefined}
              >
                {l.t}
              </text>
            ))}
            <text x="84" y="2704" fontFamily="Liberation Sans, sans-serif" fontSize="29" fill="#f4f7f6" stroke="#8f9694" strokeWidth="1.6" paintOrder="stroke">Google</text>
          </svg>

          <div className="absolute left-[13px] top-[16px] h-[46px] w-[144px] bg-white rounded-[2px] shadow-[0_1px_4px_rgba(0,0,0,0.3)] flex items-center font-['Roboto',sans-serif] text-[16px]">
            <span className="w-[57px] text-center font-bold text-black border-r border-[#e6e6e6] leading-[46px]">Map</span>
            <span className="flex-1 text-center text-[#666]">Satellite</span>
          </div>

          <div className="absolute left-[2748px] top-[16px] w-[40px] h-[36px] bg-white flex items-center justify-center">
            <svg viewBox="0 0 20 20" className="w-[24px] h-[24px]" fill="none" stroke="#444" strokeWidth="2.2">
              <path d="M2 7 V2 H7 M13 2 H18 V7 M18 13 V18 H13 M7 18 H2 V13" />
            </svg>
          </div>

          <div className="absolute left-[1302px] top-[447px] w-[201px] h-[115px] bg-white/95 border-2 border-[#2d2e5f] flex items-center justify-center">
            <Logo text="#1e2c66" tag="#c8c8c8" swirl="#b5b8c4" light="#5a6aa8" dark="#142458" cls="w-[156px] h-[78px]" />
          </div>

          <div className="absolute left-[2750px] top-[942px] w-[42px] h-[44px] bg-white shadow-[0_1px_3px_rgba(0,0,0,0.25)] flex items-center justify-center">
            <svg viewBox="0 0 20 32" className="w-[20px] h-[32px]">
              <circle cx="10" cy="5" r="4.5" fill="#f5b400" />
              <path d="M5 10 H15 L18 22 H15 V32 H11 V22 H9 V32 H5 V22 H2Z" fill="#f5b400" stroke="#c98a00" strokeWidth="0.6" />
              <path d="M9 10 H11 L10.5 20 H9.5Z" fill="#e2552a" />
            </svg>
          </div>

          <div className="absolute left-[2750px] top-[1002px] w-[42px] h-[85px] bg-white shadow-[0_1px_3px_rgba(0,0,0,0.25)] flex flex-col items-center">
            <div className="h-[42px] w-full flex items-center justify-center border-b border-[#e6e6e6]">
              <span className="relative w-[16px] h-[16px]">
                <span className="absolute left-0 top-[6px] w-[16px] h-[4px] bg-[#555]" />
                <span className="absolute left-[6px] top-0 w-[4px] h-[16px] bg-[#555]" />
              </span>
            </div>
            <div className="flex-1 w-full flex items-center justify-center">
              <span className="w-[16px] h-[4px] bg-[#555]" />
            </div>
          </div>

          <div className="absolute right-0 bottom-0 h-[18px] pl-[7px] pr-[7px] bg-white/30 flex items-center font-['Roboto',sans-serif] text-[15.4px] leading-[18px] text-[#555]">
            <span>Map data ©2018 Google</span>
            <span className="ml-[19px]">200 m</span>
            <span className="ml-[6px] w-[53px] h-[7px] border-b-2 border-x-2 border-[#444]" />
            <span className="ml-[20px]">Terms of Use</span>
            <span className="ml-[18px]">Report a map error</span>
          </div>
        </div>

        <footer className="h-[485px] bg-[#4d4d4d] pl-[244px] pt-[78px] text-[#dcdcdc] font-light">
          <div className="h-[257px] flex">
            <Logo text="#f0f0f0" tag="#b9b9b9" swirl="#b5b5b5" light="#a9a7cb" dark="#413a82" cls="w-[264px] h-[132px]" outline />
            <div className="ml-[148px] w-[560px] text-[24.5px]">
              <p className="mt-[2px] leading-[38px]">Email: sales@ashgrovehomes.com</p>
              <p className="leading-[38px]">Telephone: 01483 209600</p>
              <p className="mt-[27px] leading-[41px]">Ashgrove Homes, The Bothy, Albury Park, Albury, Guildford, Surrey GU5 9BH</p>
            </div>
            <div className="ml-[14px] w-[1340px]">
              <h2 className="mt-0 text-[38.3px] leading-[50px] text-[#e4e4e4]">Register for news</h2>
              <p className="mt-[16px] text-[24.3px] leading-[40px]">Please enter your email address below to receive all the latest Ashgrove Homes news</p>
              <div className="mt-[56px] flex items-start gap-[47px]">
                <div className="w-[871px] h-[70px] border-[3px] border-white flex items-center pl-[22px] gap-[13px] text-[21.5px] text-[#c8c8c8]">
                  <svg viewBox="0 0 32 32" className="w-[31px] h-[31px]" fill="none" stroke="#d8d8d8" strokeWidth="1.4">
                    <rect x="2" y="6" width="28" height="20" rx="1" />
                    <path d="M2 7 L16 18 L30 7" />
                  </svg>
                  <span>Please insert your email address</span>
                </div>
                <div className={`mt-[1px] w-[413px] h-[67px] bg-[#332c66] flex items-center justify-center pl-[46px] ${serif} text-[24.5px] text-white`}>Subscribe Now</div>
              </div>
            </div>
          </div>
          <p className="text-[19.6px] leading-[38px] text-[#c9c9c9]">© Ashgrove Homes Limited 2018 | Cookies Policy</p>
          <p className="text-[19.55px] leading-[38px] text-[#c9c9c9]">Ashgrove Homes Limited is a company registered in England and Wales. Registered number: 08453216. Registered office: The Bothy, Albury Park, Albury, Guildford, Surrey, GU5 9BH.</p>
        </footer>
      </div>
    </div>
  );
}
